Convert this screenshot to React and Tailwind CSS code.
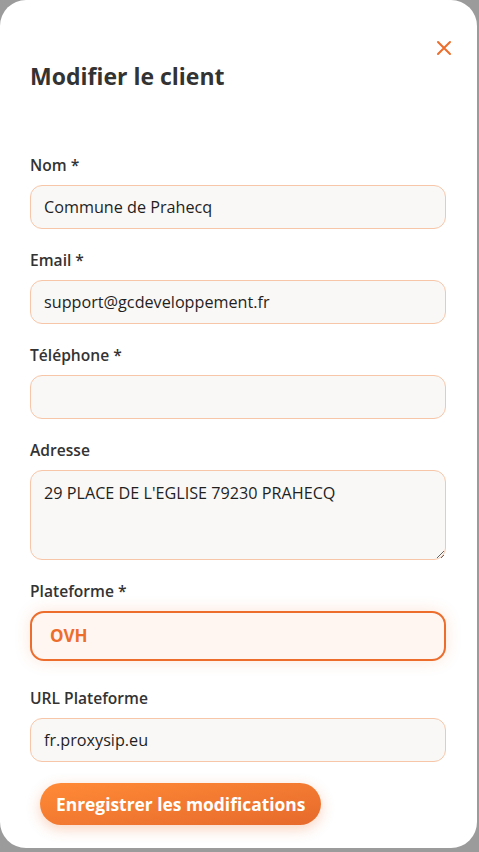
import { useState } from 'react'

const font = { fontFamily: '"Open Sans", "Noto Sans", sans-serif' }

const Field = ({ label, className = '', children }) => (
    <div className={`flex flex-col ${className}`}>
        <label className="text-[15.6px] leading-[20px] font-semibold text-[#333333] mb-[10px]">{label}</label>
        {children}
    </div>
)

const inputCls = "w-full h-[44px] rounded-[12px] border border-[#f7c6a9] bg-[#faf8f6] px-[13px] text-[16.2px] text-[#1f1f1f] outline-none"

const App = () => {
    const [nom, setNom] = useState('Commune de Prahecq')
    const [email, setEmail] = useState('support@gcdeveloppement.fr')
    const [tel, setTel] = useState('')
    const [adresse, setAdresse] = useState("29 PLACE DE L'EGLISE 79230 PRAHECQ")
    const [url, setUrl] = useState('fr.proxysip.eu')

    return (
        <div className="w-[479px] h-[852px] bg-[#9b9b9b] overflow-hidden" style={font}>
            <div className="w-[477px] h-[848px] bg-white rounded-[26px] px-[30px] pt-[38px] flex flex-col">
                <div className="flex justify-end">
                    <button className="w-[20px] h-[20px] mr-[-7px] flex items-center justify-center text-[#ec6d2c]">
                        <svg width="16" height="16" viewBox="0 0 16 16" fill="none" stroke="currentColor" strokeWidth="2" strokeLinecap="round">
                            <path d="M2 2 L14 14 M14 2 L2 14" />
                        </svg>
                    </button>
                </div>
                <h2 className="mt-[3px] text-[23px] leading-[30px] font-bold text-[#333333]">Modifier le client</h2>
                <form className="mt-[64px] flex flex-col gap-[21px] w-[416px]" onSubmit={e => e.preventDefault()}>
                    <Field label="Nom *">
                        <input className={inputCls} value={nom} onChange={e => setNom(e.target.value)} />
                    </Field>
                    <Field label="Email *">
                        <input className={inputCls} value={email} onChange={e => setEmail(e.target.value)} />
                    </Field>
                    <Field label="Téléphone *">
                        <input className={inputCls} value={tel} onChange={e => setTel(e.target.value)} />
                    </Field>
                    <Field label="Adresse">
                        <textarea
                            className="w-full h-[90px] rounded-[12px] border border-[#f7c6a9] bg-[#faf8f6] px-[13px] py-[10px] text-[16.2px] leading-[24px] text-[#1f1f1f] outline-none"
                            value={adresse}
                            onChange={e => setAdresse(e.target.value)}
                        />
                    </Field>
                    <Field label="Plateforme *" className="mb-[6px]">
                        <div className="w-full h-[50px] rounded-[14px] border-2 border-[#ec6d2c] bg-[#fff6f1] px-[18px] flex items-center text-[17px] font-bold text-[#ec6d2c] shadow-[0_0_16px_rgba(236,109,44,0.18)]">
                            OVH
                        </div>
                    </Field>
                    <Field label="URL Plateforme">
                        <input className={inputCls} value={url} onChange={e => setUrl(e.target.value)} />
                    </Field>
                    <div className="pl-[10px]">
                        <button type="submit" className="h-[42px] px-[16px] rounded-full bg-gradient-to-br from-[#ff8a36] to-[#e66a2c] text-white text-[17.4px] font-bold shadow-[0_4px_14px_rgba(236,109,44,0.3)]">
                            Enregistrer les modifications
                        </button>
                    </div>
                </form>
            </div>
        </div>
    )
}

export default App
